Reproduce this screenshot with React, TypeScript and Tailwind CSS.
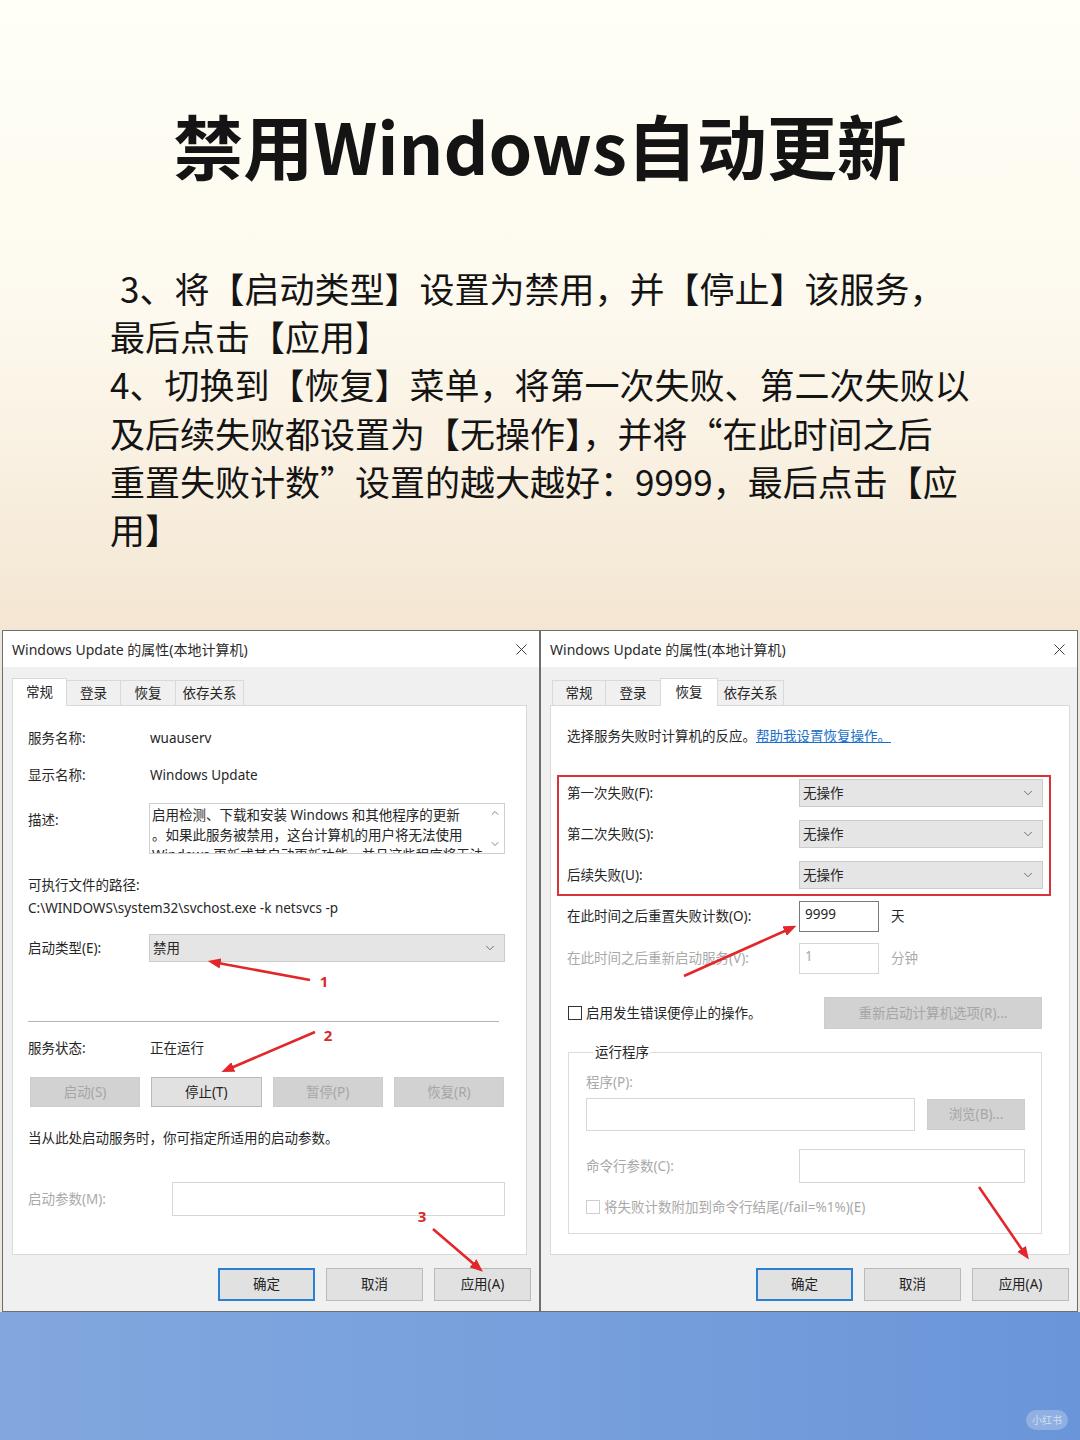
import type { ReactNode } from "react";
import { ChevronDown, ChevronUp, X } from "lucide-react";

// 对话框里的文字统一用这套字体
const UI = "font-['Noto_Sans','Noto_Sans_CJK_SC',sans-serif] text-[13.5px] text-[#262626]";
const MUTED = "text-[#a9a9a9]";

function Btn({
  children,
  disabled,
  primary,
  className = "",
}: {
  children: ReactNode;
  disabled?: boolean;
  primary?: boolean;
  className?: string;
}) {
  let look = "bg-[#e1e1e1] border border-[#b9b9b9] text-[#222]";
  if (disabled) look = "bg-[#d2d2d2] border border-[#cdcdcd] text-[#a6a6a6]";
  if (primary) look = "bg-[#e1e1e1] border-2 border-[#2a80d2] text-[#222]";
  return <div className={`flex items-center justify-center ${look} ${className}`}>{children}</div>;
}

function Select({ value, className = "" }: { value: string; className?: string }) {
  return (
    <div
      className={`h-[28px] bg-[#e5e5e5] border border-[#cbcbcb] flex items-center justify-between pl-[3px] pr-[7px] ${className}`}
    >
      <span>{value}</span>
      <ChevronDown size={14} strokeWidth={1.4} className="text-[#555]" />
    </div>
  );
}

function Tab({ label, active, className = "" }: { label: string; active?: boolean; className?: string }) {
  if (active) {
    return (
      <div
        className={`relative z-10 -mb-px -ml-px first:ml-0 h-[28px] bg-white border border-b-0 border-[#d9d9d9] flex items-start justify-center pt-[3px] ${className}`}
      >
        {label}
      </div>
    );
  }
  return (
    <div
      className={`-ml-px first:ml-0 h-[25px] bg-[#f0f0f0] border border-b-0 border-[#d9d9d9] flex items-center justify-center ${className}`}
    >
      {label}
    </div>
  );
}

function Dialog({
  tabs,
  children,
  bodyClass,
  panelClass,
}: {
  tabs: ReactNode;
  children: ReactNode;
  bodyClass: string;
  panelClass: string;
}) {
  return (
    <div className={`w-[538px] h-[682px] border border-[#6e6e6e] bg-[#f0f0f0] flex flex-col ${UI}`}>
      <div className="h-[36px] shrink-0 bg-white flex items-center justify-between pl-[9px] pr-[8px]">
        <span className="text-[14px] text-[#2b2b2b]">Windows Update 的属性(本地计算机)</span>
        <X size={19} strokeWidth={1.2} className="text-[#333]" />
      </div>
      <div className={`flex flex-col pt-[10px] ${bodyClass}`}>
        <div className="h-[28px] flex items-end">{tabs}</div>
        <div className={`h-[550px] bg-white border border-[#d9d9d9] ${panelClass}`}>{children}</div>
        <div className="mt-[13px] h-[33px] flex justify-end gap-[11px]">
          <Btn primary className="w-[97px]">确定</Btn>
          <Btn className="w-[97px]">取消</Btn>
          <Btn className="w-[97px]">应用(A)</Btn>
        </div>
      </div>
    </div>
  );
}

function GeneralPanel() {
  return (
    <div className="h-full flex flex-col pl-[15px] pr-[21px] pt-[22px]">
      <div className="h-[20px] flex items-center">
        <span className="w-[122px]">服务名称:</span>
        <span>wuauserv</span>
      </div>
      <div className="mt-[17px] h-[20px] flex items-center">
        <span className="w-[122px]">显示名称:</span>
        <span>Windows Update</span>
      </div>
      <div className="mt-[18px] flex">
        <span className="w-[121px] mt-[7px] leading-[20px]">描述:</span>
        <div className="flex-1 h-[51px] border border-[#cfcfcf] flex overflow-hidden">
          <div className="flex-1 pl-[2px] pt-[1px] leading-[20px] whitespace-nowrap overflow-hidden">
            <div>启用检测、下载和安装 Windows 和其他程序的更新</div>
            <div>。如果此服务被禁用，这台计算机的用户将无法使用</div>
            <div>Windows 更新或其自动更新功能，并且这些程序将无法</div>
          </div>
          <div className="w-[18px] flex flex-col items-center justify-between py-[3px]">
            <ChevronUp size={12} strokeWidth={1.6} className="text-[#666]" />
            <ChevronDown size={12} strokeWidth={1.6} className="text-[#666]" />
          </div>
        </div>
      </div>
      <div className="mt-[21px] h-[20px] flex items-center">可执行文件的路径:</div>
      <div className="mt-[3px] h-[20px] flex items-center">{"C:\\WINDOWS\\system32\\svchost.exe -k netsvcs -p"}</div>
      <div className="mt-[16px] flex items-center">
        <span className="w-[121px]">启动类型(E):</span>
        <Select value="禁用" className="flex-1" />
      </div>
      <div className="mt-[59px] h-px bg-[#b4b4b4] mr-[6px]" />
      <div className="mt-[16px] h-[20px] flex items-center">
        <span className="w-[122px]">服务状态:</span>
        <span>正在运行</span>
      </div>
      <div className="mt-[19px] h-[30px] grid grid-cols-4 gap-[11px] pl-[2px] pr-[1px]">
        <Btn disabled>启动(S)</Btn>
        <Btn>停止(T)</Btn>
        <Btn disabled>暂停(P)</Btn>
        <Btn disabled>恢复(R)</Btn>
      </div>
      <div className="mt-[21px] h-[20px] flex items-center">当从此处启动服务时，你可指定所适用的启动参数。</div>
      <div className="mt-[34px] flex items-center">
        <span className={`w-[144px] ${MUTED}`}>启动参数(M):</span>
        <div className="flex-1 h-[34px] border border-[#d6d6d6]" />
      </div>
    </div>
  );
}

function RecoveryPanel() {
  return (
    <div className="h-full flex flex-col pt-[20px]">
      <div className="pl-[16px] h-[20px] flex items-center">
        <span>选择服务失败时计算机的反应。</span>
        <span className="text-[#1a6fc9] underline">帮助我设置恢复操作。</span>
      </div>
      <div className="mt-[29px] ml-[6px] w-[494px] border-2 border-[#d8323a] pt-[2px] pb-[5px] pl-[8px] pr-[6px] flex flex-col gap-[13px]">
        {["第一次失败(F):", "第二次失败(S):", "后续失败(U):"].map((label) => (
          <div key={label} className="h-[28px] flex items-center justify-between">
            <span>{label}</span>
            <Select value="无操作" className="w-[244px]" />
          </div>
        ))}
      </div>
      <div className="mt-[5px] pl-[16px] h-[31px] flex items-center">
        <span className="w-[232px]">在此时间之后重置失败计数(O):</span>
        <div className="w-[80px] h-[31px] border border-[#7a7a7a] pl-[5px] pt-[2px] leading-[20px]">9999</div>
        <span className="ml-[12px]">天</span>
      </div>
      <div className={`mt-[11px] pl-[16px] h-[31px] flex items-center ${MUTED}`}>
        <span className="w-[232px]">在此时间之后重新启动服务(V):</span>
        <div className="w-[80px] h-[31px] border border-[#d6d6d6] pl-[5px] pt-[2px] leading-[20px]">1</div>
        <span className="ml-[12px]">分钟</span>
      </div>
      <div className="mt-[23px] pl-[17px] pr-[27px] h-[32px] flex items-center justify-between">
        <div className="flex items-center">
          <span className="w-[14px] h-[14px] border border-[#333] bg-white" />
          <span className="ml-[4px]">启用发生错误便停止的操作。</span>
        </div>
        <Btn disabled className="w-[218px] h-[32px]">重新启动计算机选项(R)...</Btn>
      </div>
      <fieldset className="mt-[13px] ml-[17px] w-[474px] border border-[#dcdcdc] pl-[17px] pr-[16px] pb-[16px]">
        <legend className="ml-[8px] px-[1px] leading-[20px]">运行程序</legend>
        <div className={`mt-[10px] h-[20px] flex items-center ${MUTED}`}>程序(P):</div>
        <div className="mt-[6px] flex items-center justify-between">
          <div className="w-[329px] h-[33px] border border-[#d6d6d6]" />
          <Btn disabled className="w-[98px] h-[31px]">浏览(B)...</Btn>
        </div>
        <div className="mt-[18px] flex items-center justify-between">
          <span className={MUTED}>命令行参数(C):</span>
          <div className="w-[226px] h-[34px] border border-[#d6d6d6]" />
        </div>
        <div className={`mt-[14px] h-[20px] flex items-center ${MUTED}`}>
          <span className="w-[14px] h-[14px] border border-[#cfcfcf]" />
          <span className="ml-[4px]">将失败计数附加到命令行结尾(/fail=%1%)(E)</span>
        </div>
      </fieldset>
    </div>
  );
}

function Arrows() {
  const red = "#e2262a";
  const lines: [number, number, number, number][] = [
    [310, 350, 218, 333],
    [315, 402, 231, 438],
    [433, 599, 475, 635],
    [684, 346, 787, 300],
    [979, 557, 1023, 621],
  ];
  return (
    <svg className="absolute inset-0 pointer-events-none" width="1080" height="682" viewBox="0 0 1080 682">
      <defs>
        <marker id="head" markerWidth="5" markerHeight="4" refX="1" refY="2" orient="auto">
          <path d="M0,0 L5,2 L0,4 Z" fill={red} />
        </marker>
      </defs>
      {lines.map(([x1, y1, x2, y2], i) => (
        <line key={i} x1={x1} y1={y1} x2={x2} y2={y2} stroke={red} strokeWidth="2.6" markerEnd="url(#head)" />
      ))}
      <g fill="#d62a2a" fontSize="15" fontWeight="700" fontFamily="'Noto Sans', sans-serif" textAnchor="middle">
        <text x="324" y="357">1</text>
        <text x="328" y="411">2</text>
        <text x="422" y="592">3</text>
      </g>
    </svg>
  );
}

export default function App() {
  return (
    <div className="w-[1080px] h-[1440px] overflow-hidden" lang="zh-CN">
      {/* 上半部分：标题 + 步骤说明 */}
      <div className="h-[630px] bg-gradient-to-b from-[#fffff6] via-[#fdf9ee] to-[#f4e6d2] font-['Noto_Sans_CJK_SC',sans-serif] text-[#141414]">
        <h1 className="pt-[109px] text-center text-[70px] leading-[72px] font-bold">禁用Windows自动更新</h1>
        <div className="mt-[83px] pl-[110px] text-[35px] leading-[48.2px] whitespace-nowrap">
          <div className="pl-[10px]">3、将【启动类型】设置为禁用，并【停止】该服务，</div>
          <div>最后点击【应用】</div>
          <div>4、切换到【恢复】菜单，将第一次失败、第二次失败以</div>
          <div>及后续失败都设置为【无操作】，并将“在此时间之后</div>
          <div>重置失败计数”设置的越大越好：9999，最后点击【应</div>
          <div>用】</div>
        </div>
      </div>

      {/* 两个属性对话框 */}
      <div className="relative h-[682px] flex px-[2px] bg-[#ece6dc]">
        <Dialog
          bodyClass="pl-[9px] pr-[8px]"
          panelClass="mr-[4px]"
          tabs={
            <>
              <Tab label="常规" active className="w-[55px]" />
              <Tab label="登录" className="w-[55px]" />
              <Tab label="恢复" className="w-[56px]" />
              <Tab label="依存关系" className="w-[69px]" />
            </>
          }
        >
          <GeneralPanel />
        </Dialog>
        <Dialog
          bodyClass="pl-[9px] pr-[8px]"
          panelClass="-mr-[1px]"
          tabs={
            <div className="flex items-end pl-[2px]">
              <Tab label="常规" className="w-[54px]" />
              <Tab label="登录" className="w-[56px]" />
              <Tab label="恢复" active className="w-[58px]" />
              <Tab label="依存关系" className="w-[67px]" />
            </div>
          }
        >
          <RecoveryPanel />
        </Dialog>
        <Arrows />
      </div>

      {/* 底部桌面蓝色 */}
      <div className="relative h-[128px] bg-gradient-to-r from-[#82a7de] via-[#77a0dc] to-[#6a95d8]">
        <div className="absolute right-[12px] bottom-[10px] h-[20px] px-[6px] rounded-full bg-white/25 text-[10px] leading-[20px] text-white/60 font-['Noto_Sans_CJK_SC',sans-serif]">
          小红书
        </div>
      </div>
    </div>
  );
}
